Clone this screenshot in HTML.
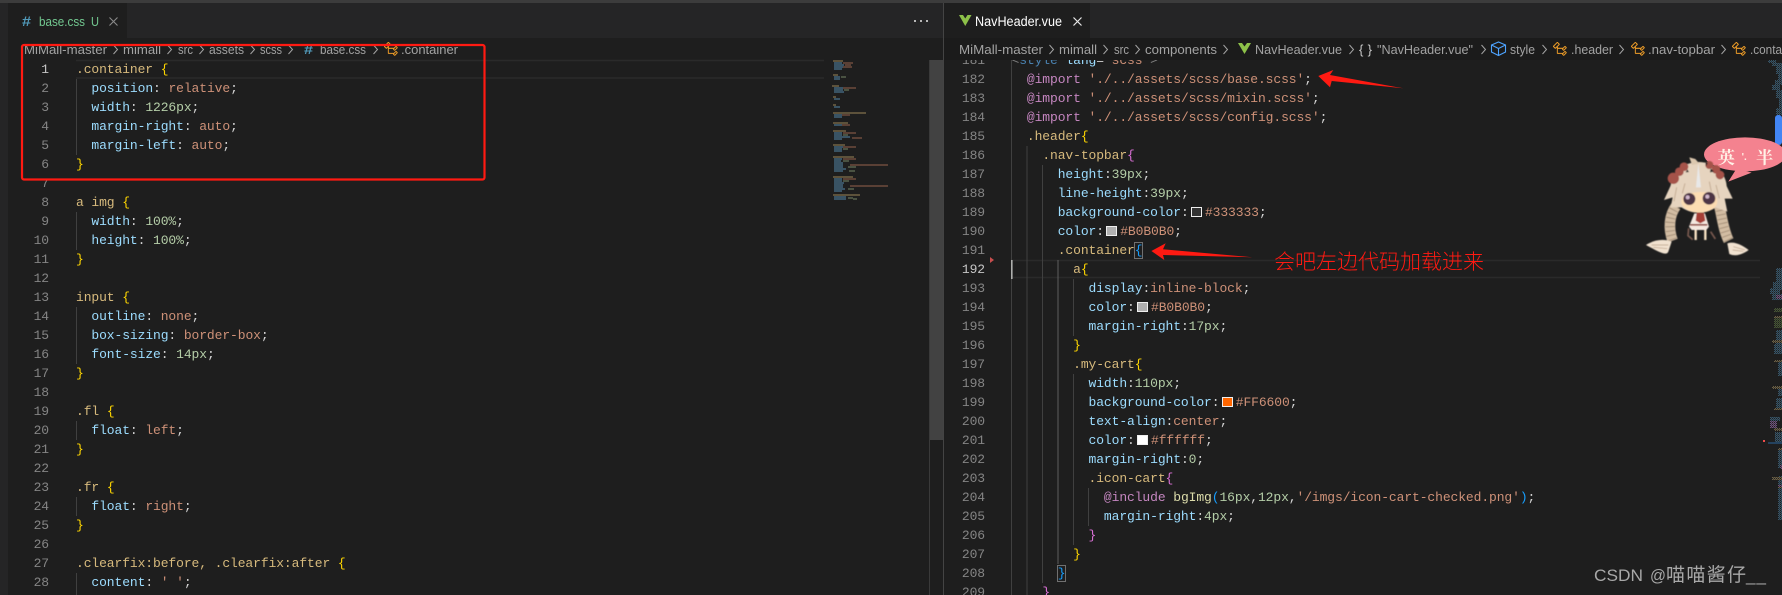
<!DOCTYPE html>
<html lang="zh"><head><meta charset="utf-8"><title>VS Code</title>
<style>
html,body{margin:0;padding:0;background:#1e1e1e;width:1782px;height:595px;overflow:hidden}
.abs{position:absolute}
#code1,#code2,#n1,#n2{position:absolute;font:13px/19px "Liberation Mono",monospace;letter-spacing:-.1px;white-space:pre;color:#d4d4d4}
#n1,#n2{color:#858585;text-align:right;letter-spacing:-.1px}
#n1 .c,#n2 .c{color:#c6c6c6}
#code1 div,#code2 div,#n1 div,#n2 div{height:19px}
.p{color:#9cdcfe}.v{color:#ce9178}.n{color:#b5cea8}.s{color:#d7ba7d}.y{color:#ffd700}.m{color:#da70d6}.b{color:#179fff}.a{color:#c586c0}.f{color:#dcdcaa}.t{color:#569cd6;opacity:.8}.g{color:#808080}
.sw{display:inline-block;box-sizing:border-box;width:11px;height:10px;margin:0 3px 0 2.3px;border:1px solid #eee;vertical-align:-1px}
.bx{outline:1px solid #707070;outline-offset:0}
svg{position:absolute;left:0;top:0}
svg text{font-family:"Liberation Sans","Noto Sans CJK SC",sans-serif}
</style></head>
<body>
<svg width="1782" height="595" viewBox="0 0 1782 595" style="z-index:0">
<defs>
<pattern id="dith" width="2" height="2" patternUnits="userSpaceOnUse"><rect width="1" height="1" fill="#1e1e1e"/><rect x="1" y="1" width="1" height="1" fill="#1e1e1e" opacity=".5"/></pattern>
<filter id="soft" x="-5%" y="-5%" width="110%" height="110%"><feGaussianBlur stdDeviation="1.2"/></filter>
<path id="cl" d="M11.340 9.710h.71l2.670-2.670v-.71L13.380 5h-.7l-1.820 1.810h-5V5.560l1.860-1.850V3l-2-2H5L1 5v.71l2 2h.71l1.140-1.150v5.790l.5.5H10v.52l1.330 1.340h.71l2.670-2.670v-.71L13.370 10h-.7l-1.860 1.850h-5v-4H10v.48l1.340 1.380zm1.690-3.650l.63.630-2 2-.63-.63 2-2zm0 5l.63.630-2 2-.63-.63 2-2zM3.350 6.650l-1.290-1.300 3.290-3.290 1.300 1.290-3.300 3.300z"/>
</defs>
<rect width="1782" height="595" fill="#1e1e1e"/>
<rect y="0" width="1782" height="38" fill="#252526"/>
<rect y="0" width="1782" height="3" fill="#3c3c3c"/>
<rect x="0" y="3" width="8" height="592" fill="#252526"/>
<rect x="8" y="3" width="119" height="35" fill="#1e1e1e"/>
<rect x="944" y="3" width="146" height="35" fill="#1e1e1e"/>
<rect y="38" x="8" width="921" height="22" fill="#1e1e1e"/>
<rect y="38" x="944" width="838" height="22" fill="#1b1b1b"/>
<rect x="943" y="3" width="1" height="592" fill="#444"/>
<rect x="929" y="60" width="14" height="380" fill="#424242"/>
<rect x="929" y="60" width="1" height="535" fill="#3a3a3a"/>
<!-- current line highlights -->
<path d="M76 60.5H824M76 78H824M1011 260.5H1760M1011 277.5H1760" stroke="#2a2a2a" stroke-width="1.5" fill="none"/>
<!-- indent guides -->
<path d="M76.5 79V155M76.5 212V250M76.5 307V364M76.5 421V440M76.5 497V516M76.5 573V595" stroke="#404040" fill="none"/>
<path d="M1011.5 60V595M1027 146V595M1042.5 165V583M1073.5 279V336M1073.5 374V545M1088.5 488V526" stroke="#404040" fill="none"/>
<path d="M1058 260V564" stroke="#5e5e5e" fill="none"/>
<rect x="1011" y="260" width="1.6" height="19" fill="#aeafad"/>
<path d="M990 257l4 3-4 3z" fill="#c74e4e"/>

<!-- left tab -->
<text x="22" y="26" font-size="14" font-weight="bold" fill="#519aba" textLength="9" lengthAdjust="spacingAndGlyphs">#</text>
<text x="39" y="26" font-size="13" fill="#73c991" textLength="46" lengthAdjust="spacingAndGlyphs">base.css</text>
<text x="91" y="26" font-size="13" fill="#73c991" textLength="8" lengthAdjust="spacingAndGlyphs">U</text>
<path d="M109.500 17.500l8 8m0-8l-8 8" stroke="#8a8a8a" stroke-width="1.1" fill="none"/>
<g fill="#b8b8b8"><rect x="914" y="20" width="2" height="2"/><rect x="920" y="20" width="2" height="2"/><rect x="926" y="20" width="2" height="2"/></g>
<!-- right tab -->
<path d="M959 15h12.500l-6.250 11z" fill="#8dc149"/><path d="M963 15h4.500l-2.250 3.500z" fill="#1e1e1e"/>
<text x="975" y="26" font-size="13.500" fill="#fff" textLength="87" lengthAdjust="spacingAndGlyphs">NavHeader.vue</text>
<path d="M1073.500 17.500l8 8m0-8l-8 8" stroke="#e8e8e8" stroke-width="1.2" fill="none"/>

<!-- breadcrumbs -->
<g font-size="13" fill="#a3a3a3">
<text x="24" y="54" textLength="83" lengthAdjust="spacingAndGlyphs">MiMall-master</text>
<text x="123" y="54" textLength="38" lengthAdjust="spacingAndGlyphs">mimall</text>
<text x="178" y="54" textLength="15" lengthAdjust="spacingAndGlyphs">src</text>
<text x="209" y="54" textLength="35" lengthAdjust="spacingAndGlyphs">assets</text>
<text x="260" y="54" textLength="22" lengthAdjust="spacingAndGlyphs">scss</text>
<text x="304" y="54" font-weight="bold" fill="#519aba" textLength="9" lengthAdjust="spacingAndGlyphs">#</text>
<text x="320" y="54" textLength="46" lengthAdjust="spacingAndGlyphs">base.css</text>
<text x="401" y="54" textLength="57" lengthAdjust="spacingAndGlyphs">.container</text>
<text x="959" y="54" textLength="84" lengthAdjust="spacingAndGlyphs">MiMall-master</text>
<text x="1059" y="54" textLength="38" lengthAdjust="spacingAndGlyphs">mimall</text>
<text x="1114" y="54" textLength="15" lengthAdjust="spacingAndGlyphs">src</text>
<text x="1145" y="54" textLength="72" lengthAdjust="spacingAndGlyphs">components</text>
<text x="1255" y="54" textLength="87" lengthAdjust="spacingAndGlyphs">NavHeader.vue</text>
<text x="1359" y="54" textLength="13" fill="#c8c8c8">{}</text>
<text x="1377" y="54" textLength="96" lengthAdjust="spacingAndGlyphs">"NavHeader.vue"</text>
<text x="1510" y="54" textLength="25" lengthAdjust="spacingAndGlyphs">style</text>
<text x="1571" y="54" textLength="42" lengthAdjust="spacingAndGlyphs">.header</text>
<text x="1648" y="54" textLength="67" lengthAdjust="spacingAndGlyphs">.nav-topbar</text>
<text x="1750" y="54" textLength="32" lengthAdjust="spacingAndGlyphs">.conta</text>
</g>
<path d="M113.500 45l4 4.500-4 4.500M167.500 45l4 4.500-4 4.500M199.500 45l4 4.500-4 4.500M250.500 45l4 4.500-4 4.500M288.500 45l4 4.500-4 4.500M373.500 45l4 4.500-4 4.500M1049.500 45l4 4.500-4 4.500M1103.500 45l4 4.500-4 4.500M1135.500 45l4 4.500-4 4.500M1223.500 45l4 4.500-4 4.500M1349.500 45l4 4.500-4 4.500M1481.500 45l4 4.500-4 4.500M1542.500 45l4 4.500-4 4.500M1619.500 45l4 4.500-4 4.500M1721.500 45l4 4.500-4 4.500" fill="none" stroke="#a3a3a3" stroke-width="1"/>
<path d="M1238 43h13l-6.500 11z" fill="#8dc149"/><path d="M1242 43h5l-2.500 3.500z" fill="#1b1b1b"/>
<path d="M1491.500 45 1498.500 42 1505.500 45V52L1498.500 55.500 1491.500 52zM1491.500 45 1498.500 48.500 1505.500 45M1498.500 48.500V55.500" fill="none" stroke="#4da3ff" stroke-width="1.100"/>
<g fill="#ee9d28"><use href="#cl" x="383" y="41"/><use href="#cl" x="1552" y="41"/><use href="#cl" x="1630" y="41"/><use href="#cl" x="1731" y="41"/></g>

<!-- left minimap -->
<g fill="none" stroke-width="1.500" opacity=".75">
<path stroke="#8f7c52" d="M833 61h10M833 75h5M832 86h7M833 97h3M833 105h3M833 113h33M833 123h15M833 131h13M833 145h12M833 157h21M833 177h20M833 195h27"/>
<path stroke="#4f7d9a" d="M834 63h8M834 65h10M834 67h9M834 69h8M834 77h6M834 79h6M834 88h9M834 90h9M834 92h10M834 99h6M834 107h6M834 115h8M834 117h8M834 125h8M834 133h8M834 135h8M834 137h16M834 139h8M834 147h9M834 149h8M834 151h8M834 159h8M834 161h7M834 163h9M834 165h9M834 167h9M834 169h12M834 171h9M834 179h8M834 181h8M834 183h10M834 185h9M834 187h9M834 189h11M834 191h8M834 197h12M834 199h12"/>
<path stroke="#8a5c48" d="M843 63h10M845 65h6M843 67h9M843 88h13M842 115h8M842 125h8M843 133h13M852 138h10M843 147h13M843 159h13M850 165h38M843 179h13M850 186h38"/>
<path stroke="#6c7c5e" d="M841 77h5M844 90h5M843 135h5M843 149h5M843 161h6M848 167h8M849 171h6M843 181h6M848 189h6M848 198h5M853 199h4"/>
</g>

<!-- right minimap -->
<g opacity=".85">
<g fill="#3c5f75">
<rect x="1768" y="60" width="8" height="3"/><rect x="1772" y="63" width="10" height="3"/><rect x="1776" y="66" width="6" height="8"/><rect x="1778" y="74" width="4" height="6"/><rect x="1775" y="80" width="7" height="5"/><rect x="1772" y="85" width="8" height="5"/><rect x="1776" y="90" width="6" height="8"/><rect x="1779" y="98" width="3" height="10"/><rect x="1776" y="108" width="6" height="7"/>
<rect x="1776" y="268" width="6" height="14"/><rect x="1773" y="282" width="9" height="8"/><rect x="1770" y="288" width="10" height="6"/><rect x="1772" y="294" width="10" height="6"/><rect x="1776" y="330" width="6" height="14"/><rect x="1774" y="344" width="8" height="10"/><rect x="1778" y="360" width="4" height="16"/><rect x="1778" y="386" width="4" height="10"/><rect x="1776" y="398" width="6" height="10"/><rect x="1770" y="417" width="10" height="4"/><rect x="1775" y="432" width="7" height="12"/><rect x="1778" y="448" width="4" height="20"/><rect x="1778" y="476" width="4" height="12"/><rect x="1778" y="488" width="4" height="32"/>
</g>
<g fill="#7a6c4c"><rect x="1774" y="316" width="8" height="2"/><rect x="1772" y="340" width="10" height="3"/><rect x="1774" y="360" width="8" height="2"/><rect x="1772" y="386" width="10" height="3"/><rect x="1774" y="408" width="8" height="2"/><rect x="1774" y="428" width="8" height="3"/><rect x="1778" y="448" width="4" height="2"/><rect x="1772" y="477" width="10" height="3"/><rect x="1778" y="486" width="4" height="2"/></g>
<g fill="#4d5f3a"><rect x="1774" y="308" width="8" height="4"/><rect x="1774" y="318" width="8" height="10"/></g>
<g fill="#7e5c8c"><rect x="1776" y="295" width="6" height="4"/><rect x="1770" y="421" width="7" height="7"/><rect x="1780" y="465" width="2" height="4"/><rect x="1778" y="485" width="4" height="2"/></g>
</g>
<rect x="1768" y="60" width="14" height="55" fill="url(#dith)"/>
<rect x="1768" y="268" width="14" height="252" fill="url(#dith)"/>
<rect x="1768" y="442" width="14" height="2" fill="#24425e"/>
<rect x="1763" y="440" width="2" height="2" fill="#f14c4c"/>
</svg>

<!-- line numbers left -->
<div id="n1" style="left:19px;top:60px;width:30px;height:535px;overflow:hidden;z-index:1"><div class="c">1</div><div>2</div><div>3</div><div>4</div><div>5</div><div>6</div><div>7</div><div>8</div><div>9</div><div>10</div><div>11</div><div>12</div><div>13</div><div>14</div><div>15</div><div>16</div><div>17</div><div>18</div><div>19</div><div>20</div><div>21</div><div>22</div><div>23</div><div>24</div><div>25</div><div>26</div><div>27</div><div>28</div></div>

<div id="code1" style="left:76px;top:60px;width:850px;height:535px;overflow:hidden;z-index:1"><div><span class="s">.container</span> <span class="y">{</span></div><div>  <span class="p">position</span>: <span class="v">relative</span>;</div><div>  <span class="p">width</span>: <span class="n">1226px</span>;</div><div>  <span class="p">margin-right</span>: <span class="v">auto</span>;</div><div>  <span class="p">margin-left</span>: <span class="v">auto</span>;</div><div><span class="y">}</span></div><div> </div><div><span class="s">a img</span> <span class="y">{</span></div><div>  <span class="p">width</span>: <span class="n">100%</span>;</div><div>  <span class="p">height</span>: <span class="n">100%</span>;</div><div><span class="y">}</span></div><div> </div><div><span class="s">input</span> <span class="y">{</span></div><div>  <span class="p">outline</span>: <span class="v">none</span>;</div><div>  <span class="p">box-sizing</span>: <span class="v">border-box</span>;</div><div>  <span class="p">font-size</span>: <span class="n">14px</span>;</div><div><span class="y">}</span></div><div> </div><div><span class="s">.fl</span> <span class="y">{</span></div><div>  <span class="p">float</span>: <span class="v">left</span>;</div><div><span class="y">}</span></div><div> </div><div><span class="s">.fr</span> <span class="y">{</span></div><div>  <span class="p">float</span>: <span class="v">right</span>;</div><div><span class="y">}</span></div><div> </div><div><span class="s">.clearfix:before, .clearfix:after</span> <span class="y">{</span></div><div>  <span class="p">content</span>: <span class="v">' '</span>;</div></div>

<!-- right panel -->
<div class="abs" style="left:950px;top:60px;width:36px;height:535px;overflow:hidden;z-index:1">
<div id="n2" style="left:0;top:-9px;width:35px"><div>181</div><div>182</div><div>183</div><div>184</div><div>185</div><div>186</div><div>187</div><div>188</div><div>189</div><div>190</div><div>191</div><div class="c">192</div><div>193</div><div>194</div><div>195</div><div>196</div><div>197</div><div>198</div><div>199</div><div>200</div><div>201</div><div>202</div><div>203</div><div>204</div><div>205</div><div>206</div><div>207</div><div>208</div><div>209</div></div>
</div>
<div class="abs" style="left:1011.500px;top:60px;width:760px;height:535px;overflow:hidden;z-index:1">
<div id="code2" style="left:0;top:-9px"><div><span class="g">&lt;</span><span class="t">style</span> <span class="p">lang</span>=<span class="v">"scss"</span><span class="g">&gt;</span></div><div>  <span class="a">@import</span> <span class="v">'./../assets/scss/base.scss'</span>;</div><div>  <span class="a">@import</span> <span class="v">'./../assets/scss/mixin.scss'</span>;</div><div>  <span class="a">@import</span> <span class="v">'./../assets/scss/config.scss'</span>;</div><div>  <span class="s">.header</span><span class="y">{</span></div><div>    <span class="s">.nav-topbar</span><span class="m">{</span></div><div>      <span class="p">height</span>:<span class="n">39px</span>;</div><div>      <span class="p">line-height</span>:<span class="n">39px</span>;</div><div>      <span class="p">background-color</span>:<i class="sw" style="background:#333"></i><span class="v">#333333</span>;</div><div>      <span class="p">color</span>:<i class="sw" style="background:#b0b0b0"></i><span class="v">#B0B0B0</span>;</div><div>      <span class="s">.container</span><span class="b bx">{</span></div><div>        <span class="s">a</span><span class="y">{</span></div><div>          <span class="p">display</span>:<span class="v">inline-block</span>;</div><div>          <span class="p">color</span>:<i class="sw" style="background:#b0b0b0"></i><span class="v">#B0B0B0</span>;</div><div>          <span class="p">margin-right</span>:<span class="n">17px</span>;</div><div>        <span class="y">}</span></div><div>        <span class="s">.my-cart</span><span class="y">{</span></div><div>          <span class="p">width</span>:<span class="n">110px</span>;</div><div>          <span class="p">background-color</span>:<i class="sw" style="background:#ff6600"></i><span class="v">#FF6600</span>;</div><div>          <span class="p">text-align</span>:<span class="v">center</span>;</div><div>          <span class="p">color</span>:<i class="sw" style="background:#fff"></i><span class="v">#ffffff</span>;</div><div>          <span class="p">margin-right</span>:<span class="n">0</span>;</div><div>          <span class="s">.icon-cart</span><span class="m">{</span></div><div>            <span class="a">@include</span> <span class="f">bgImg</span><span class="b">(</span><span class="n">16px</span>,<span class="n">12px</span>,<span class="v">'/imgs/icon-cart-checked.png'</span><span class="b">)</span>;</div><div>            <span class="p">margin-right</span>:<span class="n">4px</span>;</div><div>          <span class="m">}</span></div><div>        <span class="y">}</span></div><div>      <span class="b bx">}</span></div><div>    <span class="m">}</span></div></div>
</div>

<!-- annotations -->
<svg width="1782" height="595" viewBox="0 0 1782 595" style="z-index:2">
<rect x="22" y="45" width="462.500" height="134.500" rx="2" fill="none" stroke="#ff1a12" stroke-width="2.200"/>
<polygon points="1318.300,76 1333.300,70 1330,75 1403.300,88.300 1331.700,81 1330,87.300" fill="#ff1a12"/>
<polygon points="1151.400,251 1165.700,243.300 1163,249.300 1252.500,257.300 1163,255 1164.300,260" fill="#ff1a12"/>
<text x="1274" y="269" font-size="21" fill="#ff1a12" textLength="210" style="font-family:'Noto Sans CJK SC','WenQuanYi Zen Hei',sans-serif;font-weight:300">会吧左边代码加载进来</text>

<!-- sprite -->
<rect x="1775" y="115" width="7" height="30" rx="3" fill="#4285f4"/>
<g transform="translate(1640 100) scale(.3333)">
<ellipse cx="315" cy="163" rx="123" ry="51" fill="#f4828f"/>
<polygon points="290,205 265,245 335,218" fill="#f4828f"/>
<g filter="url(#soft)">
<!-- braids -->
<path d="M108 318C88 345 84 385 98 422" stroke="#d2bca2" stroke-width="32" fill="none"/>
<path d="M238 318C246 350 250 390 266 422" stroke="#d2bca2" stroke-width="32" fill="none"/>
<path d="M108 318C88 345 84 385 98 422M238 318C246 350 250 390 266 422" stroke="#8f7a64" stroke-width="28" fill="none" stroke-dasharray="2 11"/>
<!-- braid ends -->
<path d="M18 435C40 420 70 415 95 425L85 455C80 470 55 455 18 435z" fill="#f1e2d0"/>
<path d="M262 430C285 422 310 438 326 450C305 465 285 470 268 462z" fill="#f1e2d0"/>
<path d="M35 435h50M40 442l42 4M280 440l35 10M278 450l32 4" stroke="#b59a80" stroke-width="2" fill="none"/>
<!-- hair -->
<ellipse cx="176" cy="262" rx="84" ry="76" fill="#e6d4bf"/>
<path d="M95 250L72 300 98 292 92 322 128 322 128 262zM256 250L278 296 254 296 262 335 226 322 226 262z" fill="#e6d4bf"/>
<path d="M110 262l-8 42M135 250l-8 30M228 255l10 40M208 245l6 30" stroke="#c4ad94" stroke-width="3" fill="none"/>
<path d="M148 172l18 5 12 14-22 4z" fill="#dcc8af"/>
<!-- flowers -->
<g fill="#a5524a"><circle cx="100" cy="235" r="17"/><circle cx="118" cy="215" r="13"/><circle cx="132" cy="200" r="13"/><circle cx="208" cy="195" r="12"/><circle cx="228" cy="208" r="13"/><circle cx="240" cy="225" r="13"/></g>
<path d="M195 185l8 4-4 10zM142 208l5 8-10 1zM212 205l10 10-12 2z" fill="#222"/>
<!-- horn -->
<polygon points="175,190 168,262 183,262" fill="#e8e8e8"/>
<!-- face -->
<ellipse cx="178" cy="305" rx="54" ry="33" fill="#fcdcb2"/>
<path d="M122 292C135 262 222 262 236 290C208 270 150 272 122 292z" fill="#e6d4bf"/>
<ellipse cx="148" cy="297" rx="18" ry="18" fill="#4d3445"/>
<ellipse cx="207" cy="295" rx="19" ry="19" fill="#4d3445"/>
<circle cx="143" cy="292" r="6" fill="#d2b8ce"/><circle cx="202" cy="290" r="6" fill="#d2b8ce"/>
<!-- body -->
<path d="M163 340h32l12 40-8 10h-44l-8-10z" fill="#f5e8df"/>
<path d="M170 338h22l4 24-15 8-14-8z" fill="#a63d34"/>
<path d="M150 372h52v5h-52z" fill="#8c3a30"/>
<path d="M167 390v30M196 390v30" stroke="#f9e3c4" stroke-width="7"/>
<path d="M146 385l-2 22 14 12M212 395l14 22" stroke="#7a5a50" stroke-width="5" fill="none"/>
</g>
<text x="233" y="190" font-size="52" font-weight="bold" fill="#fff1e6" style="font-family:'Noto Serif CJK SC',serif">英</text>
<text x="305" y="180" font-size="30" font-weight="bold" fill="#fff1e6">'.</text>
<text x="348" y="190" font-size="52" font-weight="bold" fill="#fff1e6" style="font-family:'Noto Serif CJK SC',serif">半</text>
</g>

<!-- watermark -->
<text x="1594" y="581" font-size="17" fill="#a8a8a8" textLength="49" lengthAdjust="spacingAndGlyphs">CSDN</text>
<text x="1650" y="581" font-size="17" fill="#a8a8a8" textLength="16" lengthAdjust="spacingAndGlyphs">@</text>
<text x="1666" y="581" font-size="19" fill="#a8a8a8" textLength="80">喵喵酱仔</text>
<text x="1746" y="581" font-size="17" fill="#a8a8a8" textLength="20">__</text>
</svg>
</body></html>
